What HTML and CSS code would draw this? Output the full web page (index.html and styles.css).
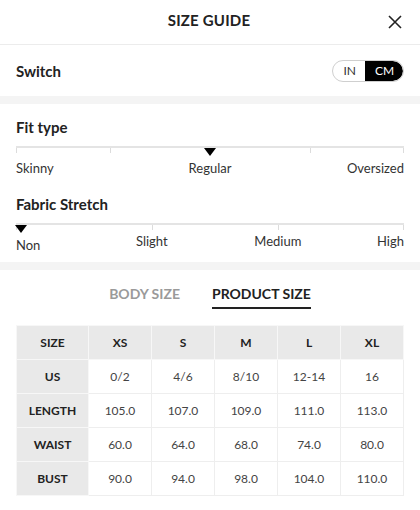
FILE: index.html
```html
<!DOCTYPE html>
<html lang="en">
<head>
<meta charset="utf-8">
<title>Size Guide</title>
<link rel="stylesheet" href="styles.css">
</head>
<body>
<div class="sheet">
  <header class="head">
    <span></span>
    <h1 class="head-title">SIZE GUIDE</h1>
    <button class="close" aria-label="Close">
      <svg width="14" height="14" viewBox="0 0 14 14"><path d="M1 1L13 13M13 1L1 13" stroke="#222" stroke-width="1.6" fill="none"/></svg>
    </button>
  </header>

  <div class="switch-row">
    <span class="row-title">Switch</span>
    <div class="toggle">
      <span class="toggle-opt">IN</span>
      <span class="toggle-opt is-on">CM</span>
    </div>
  </div>

  <div class="band"></div>

  <section class="fit">
    <h2 class="sec-title first">Fit type</h2>
    <div class="scale scale-fit">
      <span class="tick t0"></span>
      <span class="tick f1"></span>
      <span class="tick f2"></span>
      <span class="tick t100"></span>
      <span class="marker f-mid"></span>
      <span class="lbl lbl-fit left">Skinny</span>
      <span class="lbl lbl-fit f-mid center">Regular</span>
      <span class="lbl lbl-fit right">Oversized</span>
    </div>

    <h2 class="sec-title">Fabric Stretch</h2>
    <div class="scale scale-fab">
      <span class="tick t0"></span>
      <span class="tick s1"></span>
      <span class="tick s2"></span>
      <span class="tick t100"></span>
      <span class="marker s-start"></span>
      <span class="lbl lbl-fab lbl-low left">Non</span>
      <span class="lbl lbl-fab s1 center">Slight</span>
      <span class="lbl lbl-fab s2 center">Medium</span>
      <span class="lbl lbl-fab right">High</span>
    </div>
  </section>

  <div class="band"></div>

  <nav class="tabs">
    <span class="tab">BODY SIZE</span>
    <span class="tab is-active">PRODUCT SIZE</span>
  </nav>

  <table class="sizes">
    <thead>
      <tr><th>SIZE</th><th>XS</th><th>S</th><th>M</th><th>L</th><th>XL</th></tr>
    </thead>
    <tbody>
      <tr><th>US</th><td>0/2</td><td>4/6</td><td>8/10</td><td>12-14</td><td>16</td></tr>
      <tr><th>LENGTH</th><td>105.0</td><td>107.0</td><td>109.0</td><td>111.0</td><td>113.0</td></tr>
      <tr><th>WAIST</th><td>60.0</td><td>64.0</td><td>68.0</td><td>74.0</td><td>80.0</td></tr>
      <tr><th>BUST</th><td>90.0</td><td>94.0</td><td>98.0</td><td>104.0</td><td>110.0</td></tr>
    </tbody>
  </table>
</div>
</body>
</html>
```

FILE: styles.css
```css
* { box-sizing: border-box; }
html, body { margin: 0; padding: 0; background: #fff; }
body {
  font-family: Lato, "Noto Sans", "Liberation Sans", sans-serif;
  color: #222;
}
.sheet { width: 420px; }

.head {
  height: 45px;
  display: grid;
  grid-template-columns: 1fr auto 1fr;
  align-items: center;
  border-bottom: 1px solid #ececec;
  padding: 0 18px 0 16px;
}
.head-title {
  margin: 0;
  font-size: 15px;
  font-weight: 700;
  letter-spacing: 0.2px;
  line-height: 20px;
  position: relative;
  top: -2px;
}
.close {
  justify-self: end;
  background: none;
  border: 0;
  padding: 0;
  width: 14px;
  height: 14px;
  display: flex;
}

.switch-row {
  height: 51px;
  display: flex;
  align-items: center;
  justify-content: space-between;
  padding: 0 16px;
}
.row-title { font-size: 15px; font-weight: 700; }
.toggle {
  display: flex;
  height: 22px;
  border: 1px solid #cfcfcf;
  border-radius: 11px;
  overflow: hidden;
}
.toggle-opt {
  font-size: 12px;
  line-height: 20px;
  padding: 0 9px 0 10px;
  color: #333;
}
.toggle-opt.is-on {
  background: #000;
  color: #fff;
  padding: 0 10px 0 10px;
  border-radius: 0 11px 11px 0;
  width: 38px;
  text-align: center;
}

.band { height: 8px; background: #f4f4f4; }

.fit { padding: 0 16px 8px; }
.sec-title {
  margin: 14px 0 0;
  font-size: 15px;
  font-weight: 700;
  line-height: 20px;
}
.sec-title.first { margin-top: 13px; }

.scale {
  position: relative;
  margin-top: 9px;
  border-top: 2px solid #e4e4e4;
}
.scale-fit { height: 34px; }
.scale-fab { height: 31px; }
.tick {
  position: absolute;
  top: 0;
  width: 1px;
  height: 5px;
  background: #dcdcdc;
}
.t0 { left: 0; }
.t100 { right: 0; }
.tick.f1 { left: 24.2%; }
.tick.f2 { left: 75.8%; }
.tick.s1 { left: 35%; }
.tick.s2 { left: 67.5%; }

.marker {
  position: absolute;
  top: 0;
  width: 0;
  height: 0;
  border-left: 6px solid transparent;
  border-right: 6px solid transparent;
  border-top: 8px solid #000;
  margin-left: -6px;
}
.marker.f-mid { left: 50%; }
.marker.s-start { left: 5px; }

.lbl {
  position: absolute;
  font-size: 13px;
  line-height: 16px;
  color: #333;
  white-space: nowrap;
}
.lbl-fit { top: 12px; }
.lbl-fab { top: 8px; }
.lbl-fab.lbl-low { top: 12px; }
.lbl.left { left: 0; }
.lbl.right { right: 0; }
.lbl.center { transform: translateX(-50%); }
.lbl.f-mid { left: 50%; }
.lbl.s1 { left: 35%; }
.lbl.s2 { left: 67.5%; }

.tabs {
  display: flex;
  justify-content: center;
  gap: 32px;
  padding-top: 14px;
}
.tab {
  font-size: 14px;
  font-weight: 700;
  line-height: 20px;
  color: #9a9a9a;
  padding-bottom: 3px;
  border-bottom: 2px solid transparent;
}
.tab.is-active { color: #222; border-bottom-color: #222; }

.sizes {
  margin: 16px 16px 0;
  width: 388px;
  border-collapse: collapse;
  table-layout: fixed;
  font-size: 12px;
}
.sizes th, .sizes td {
  height: 34px;
  text-align: center;
  border: 1px solid #eeeeee;
  padding: 0;
}
.sizes th {
  background: #e9e9e9;
  font-weight: 700;
  color: #222;
  border-color: #f7f7f7;
}
.sizes th:first-child { width: 72px; }
.sizes td { color: #444; }
```
